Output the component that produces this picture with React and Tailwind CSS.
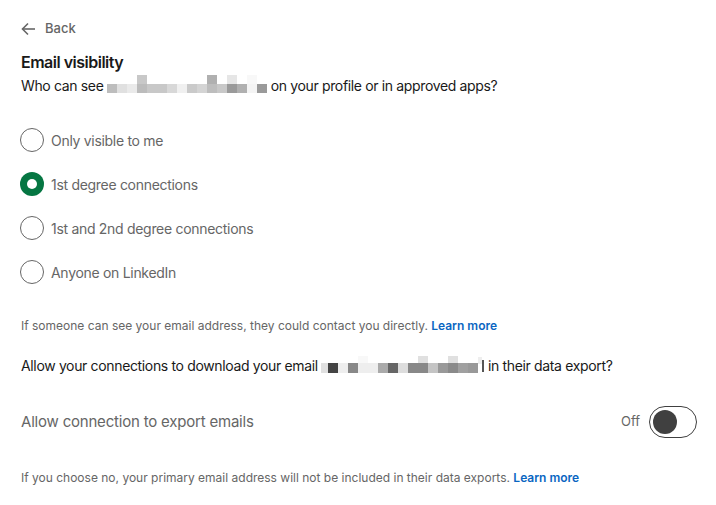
import { useState } from 'react';

const font = { fontFamily: 'Inter, "Noto Sans", sans-serif' };

// pixelated (blurred) email address blocks
const emailOne = {
  top: ['', '', '', 'bg-[#c8c8c8]', '', '', '', '', '', '', 'bg-[#b0b0b0]', '', 'bg-[#e6e6e6]', '', 'bg-[#f8f8f8]', ''],
  bottom: [
    'bg-[#bdbdbd]', 'bg-[#e0e0e0]', 'bg-[#eaeaea]', 'bg-[#bcbcbc]', 'bg-[#c8c8c8]', 'bg-[#c8c8c8]',
    'bg-[#d8d8d8]', 'bg-[#f0f0f0]', 'bg-[#cacaca]', 'bg-[#d4d4d4]', 'bg-[#bdbdbd]', 'bg-[#c8c8c8]',
    'bg-[#9a9a9a]', 'bg-[#b0b0b0]', 'bg-[#f4f4f4]', 'bg-[#9a9a9a]',
  ],
};

const emailTwo = {
  top: ['', '', '', '', 'bg-[#f8f8f8]', '', '', '', '', '', 'bg-[#e0e0e0]', '', '', 'bg-[#e0e0e0]', '', ''],
  bottom: [
    'bg-[#e0e0e0]', 'bg-[#444444]', 'bg-[#eeeeee]', 'bg-[#888888]', 'bg-[#eeeeee]', 'bg-[#eeeeee]',
    'bg-[#aaaaaa]', 'bg-[#666666]', 'bg-[#dddddd]', 'bg-[#888888]', 'bg-[#888888]', 'bg-[#c4c4c4]',
    'bg-[#999999]', 'bg-[#8a8a8a]', 'bg-[#a0a0a0]', 'bg-[#999999]',
  ],
};

const Pixelated = ({ data, firstNarrow, topH, bottomH }) => (
  <span className="inline-flex flex-col align-top">
    <span className="flex">
      {data.top.map((c, i) => (
        <span key={i} className={`${topH} ${i === 0 && firstNarrow ? 'w-[7px]' : 'w-[10px]'} ${c}`} />
      ))}
    </span>
    <span className="flex">
      {data.bottom.map((c, i) => (
        <span key={i} className={`${bottomH} ${i === 0 && firstNarrow ? 'w-[7px]' : 'w-[10px]'} ${c}`} />
      ))}
    </span>
  </span>
);

const options = [
  'Only visible to me',
  '1st degree connections',
  '1st and 2nd degree connections',
  'Anyone on LinkedIn',
];

export default function App() {
  const [selected, setSelected] = useState(1);
  const [allowExport, setAllowExport] = useState(false);

  return (
    <div className="w-[716px] h-[505px] bg-white pl-5 pr-[19px] overflow-hidden" style={font}>
      {/* Back */}
      <button className="flex items-center gap-[9px] h-5 mt-[19px] ml-[1px] text-[13px] text-[#666666] font-medium">
        <svg width="15" height="14" viewBox="0 0 15 14" fill="none" stroke="#666666" strokeWidth="1.6">
          <path d="M14 7H1.8" />
          <path d="M7 1.5L1.5 7L7 12.5" />
        </svg>
        Back
      </button>

      {/* Email visibility */}
      <h2 className="mt-[11px] ml-[1px] h-6 text-[16px] leading-6 font-semibold tracking-[-0.5px] text-[#191919]">
        Email visibility
      </h2>
      <p className="mt-[2px] ml-[1px] h-5 text-[14px] leading-5 tracking-[-0.35px] text-[#191919]">
        Who can see{' '}
        <span className="inline-block mt-[-1px] align-top">
          <Pixelated data={emailOne} topH="h-[9px]" bottomH="h-[9px]" />
        </span>{' '}
        on your profile or in approved apps?
      </p>

      <div className="mt-[22px] flex flex-col">
        {options.map((label, i) => (
          <label key={label} className="h-11 flex items-center gap-[7px] cursor-pointer" onClick={() => setSelected(i)}>
            {selected === i ? (
              <span className="w-6 h-6 rounded-full bg-[#057642] flex items-center justify-center">
                <span className="w-[10px] h-[10px] rounded-full bg-white" />
              </span>
            ) : (
              <span className="w-6 h-6 rounded-full border border-[#666666] bg-white" />
            )}
            <span className="text-[14px] tracking-[-0.3px] text-[#666666]">{label}</span>
          </label>
        ))}
      </div>

      <p className="mt-6 ml-[1px] h-4 text-[12px] leading-4 text-[#666666]">
        If someone can see your email address, they could contact you directly.{' '}
        <a className="font-semibold text-[#0a66c2]">Learn more</a>
      </p>

      <p className="mt-[22px] ml-[1px] h-5 text-[14px] leading-5 tracking-[-0.35px] text-[#191919]">
        Allow your connections to download your email{' '}
        <Pixelated data={emailTwo} firstNarrow topH="h-[7px]" bottomH="h-[10px]" />
        <span className="inline-block w-[4px] h-[7px] bg-[#eeeeee] align-top mt-[1px]" />
        <span className="inline-block w-[2px] h-[12px] bg-[#555555] align-[-1px]" /> in their data export?
      </p>

      <div className="mt-[30px] h-8 flex items-center justify-between">
        <span className="ml-[1px] text-[15px] tracking-[-0.2px] text-[#666666]">Allow connection to export emails</span>
        <div className="flex items-center gap-[9px]">
          <span className="text-[13px] text-[#666666]">{allowExport ? 'On' : 'Off'}</span>
          <button
            onClick={() => setAllowExport(!allowExport)}
            className="w-12 h-8 rounded-full border-[1.5px] border-[#404040] bg-white flex items-center px-[3px]"
          >
            <span className="w-6 h-6 rounded-full bg-[#404040]" />
          </button>
        </div>
      </div>

      <p className="mt-8 ml-[1px] h-4 text-[12px] leading-4 text-[#666666]">
        If you choose no, your primary email address will not be included in their data exports.{' '}
        <a className="font-semibold text-[#0a66c2]">Learn more</a>
      </p>
    </div>
  );
}
